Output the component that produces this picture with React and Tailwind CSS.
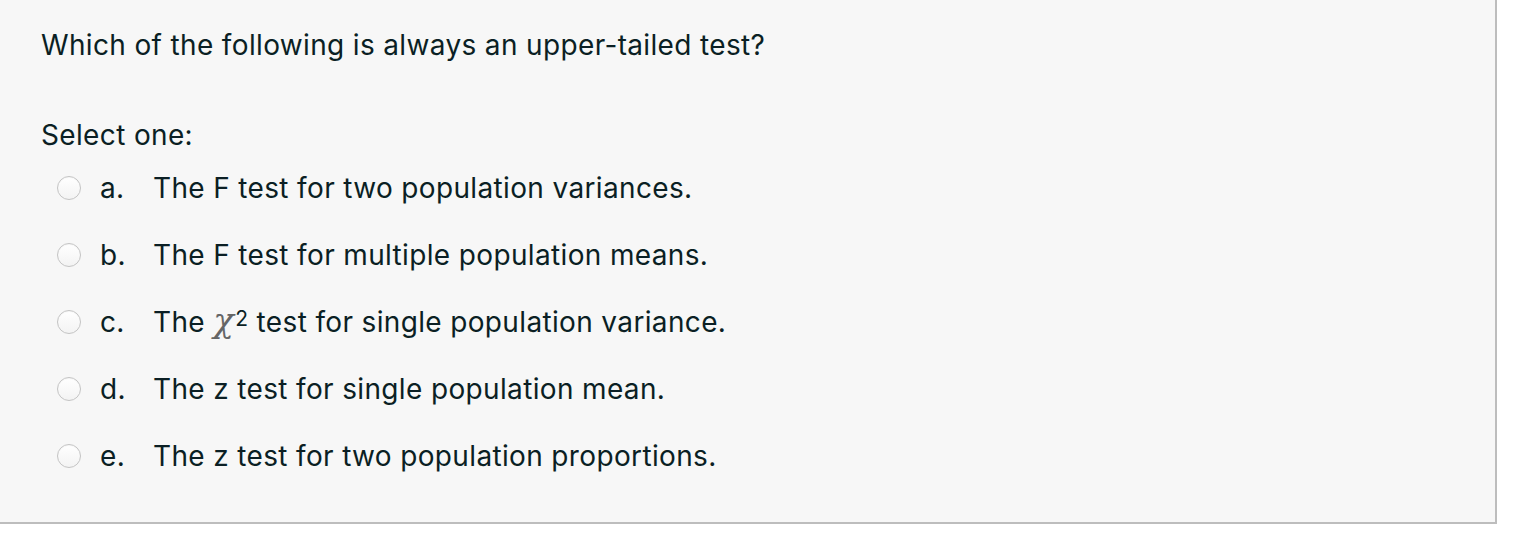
import React from 'react';

const options = [
  { letter: 'a.', text: 'The F test for two population variances.' },
  { letter: 'b.', text: 'The F test for multiple population means.' },
  { letter: 'c.', chi: true, text: ' test for single population variance.' },
  { letter: 'd.', text: 'The z test for single population mean.' },
  { letter: 'e.', text: 'The z test for two population proportions.' },
];

const Radio = () => (
  <span className="block w-[24px] h-[24px] rounded-full border border-[#c4c4c4] bg-gradient-to-b from-white to-[#f3f3f3] shadow-[inset_0_1px_1px_rgba(0,0,0,0.04)]" />
);

export default function App() {
  return (
    <div className="w-[1517px] h-[544px] bg-white font-['Inter',sans-serif] text-[#0b1f24] text-[28px] tracking-[0.35px]">
      <div className="w-[1497px] h-[524px] bg-[#f7f7f7] border-r-2 border-b-2 border-[#bdbdbd] pl-[41px] pt-[27px]">
        <p className="leading-[36px]">Which of the following is always an upper-tailed test?</p>
        <p className="mt-[54px] leading-[36px]">Select one:</p>
        <div className="mt-[1px] flex flex-col">
          {options.map((o) => (
            <div key={o.letter} className="flex items-center h-[67px]">
              <div className="ml-[16px] w-[43px]">
                <Radio />
              </div>
              <span className="w-[53px]">{o.letter}</span>
              <span className="whitespace-pre">
                {o.chi ? (
                  <>
                    The{' '}
                    <span className="font-['DejaVu_Serif',serif] italic text-[#666] text-[34px] leading-none">χ</span>
                    <sup className="text-[21px] relative -top-[6px] ml-[1px]">2</sup>
                    {o.text}
                  </>
                ) : (
                  o.text
                )}
              </span>
            </div>
          ))}
        </div>
      </div>
    </div>
  );
}
